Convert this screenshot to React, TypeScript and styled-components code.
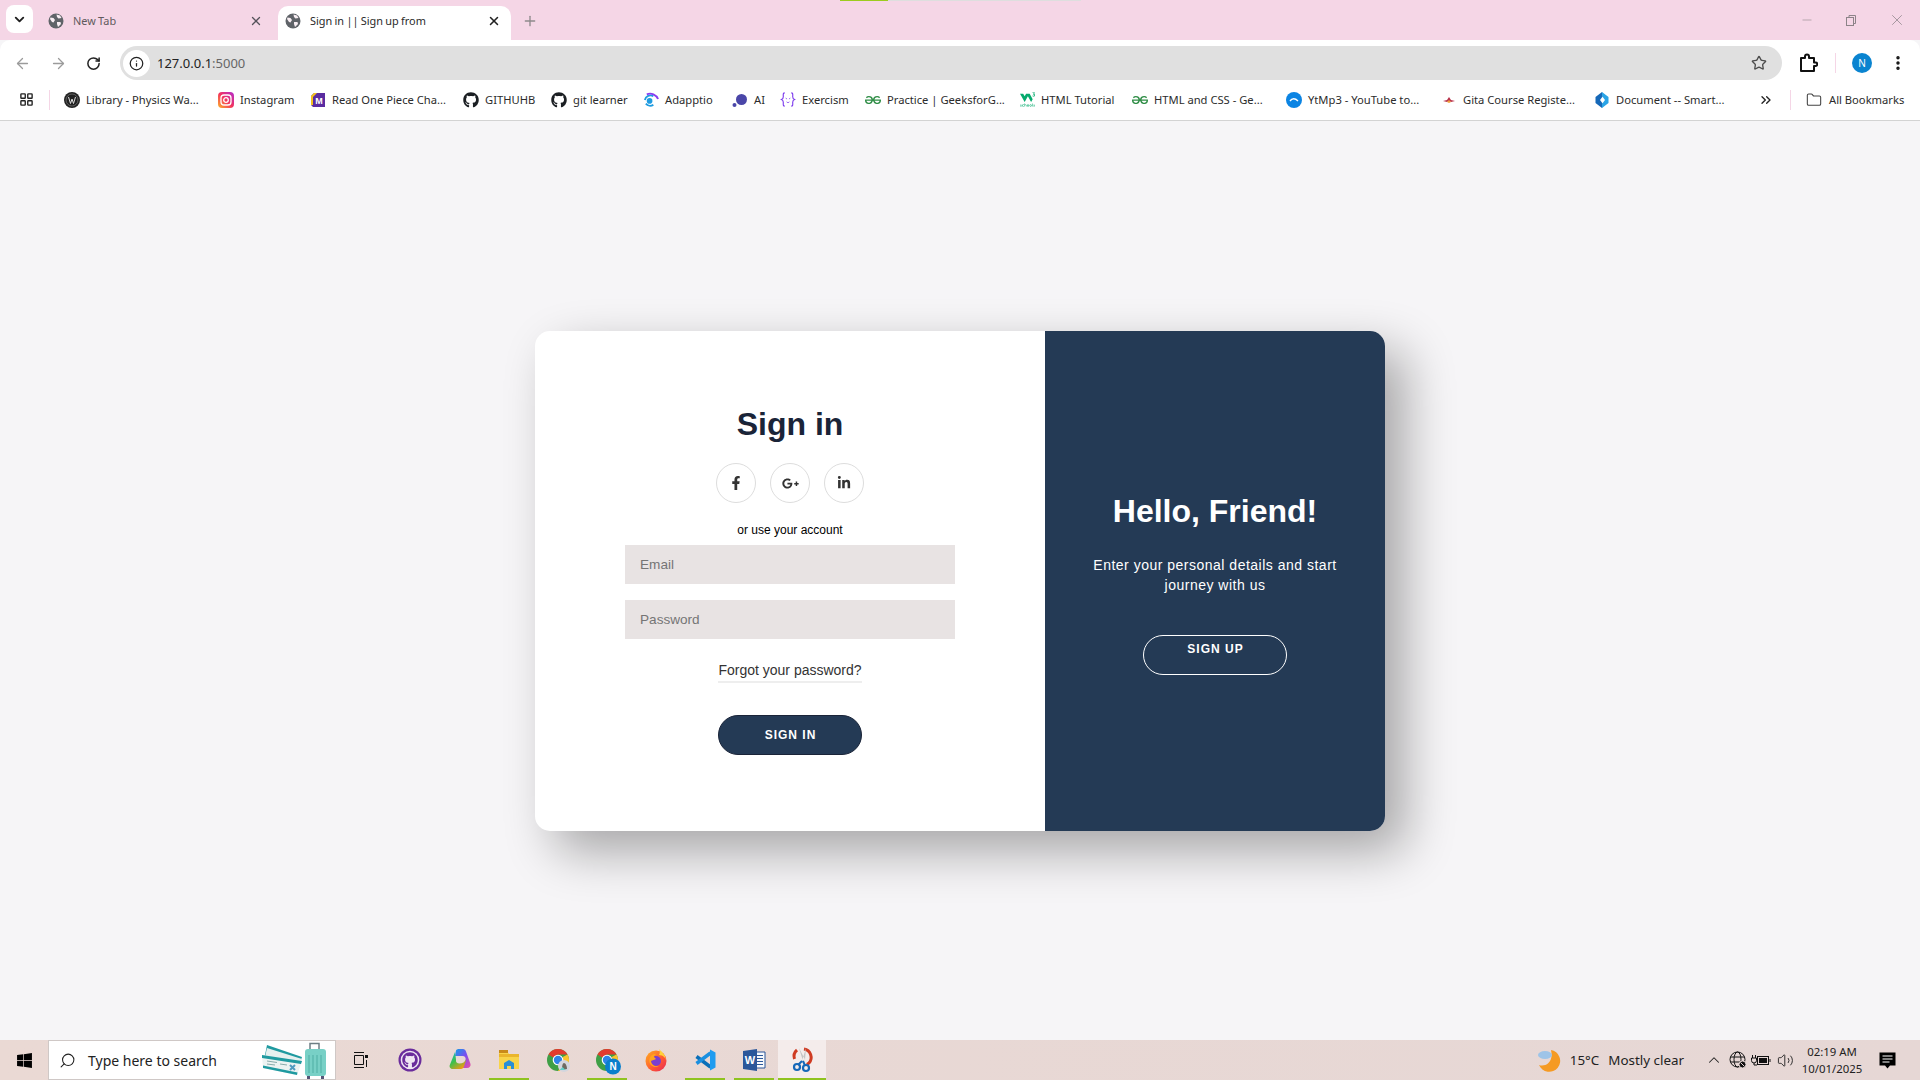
import React from "react";
import styled, { createGlobalStyle } from "styled-components";
import { ArrowLeft, ArrowRight, ChevronDown, ChevronUp, ChevronsRight, Folder, Info, LayoutGrid, MoreVertical, Plus, RotateCw, Search, Star, Volume2, X, Minus } from "lucide-react";
import { FaFacebookF, FaGooglePlusG, FaLinkedinIn, FaGithub, FaWindows } from "react-icons/fa";
import { SiGeeksforgeeks, SiW3Schools } from "react-icons/si";

const Global = createGlobalStyle`
  html, body { margin: 0; padding: 0; height: 100%; overflow: hidden; }
  #root { height: 100%; }
  * { box-sizing: border-box; }
`;

const Screen = styled.div`
  width: 1920px;
  height: 1080px;
  display: flex;
  flex-direction: column;
  background: #f6f5f7;
  font-family: "Noto Sans", "Open Sans", sans-serif;
`;

const TabStrip = styled.div`
  height: 40px;
  background: #f5d6e6;
  display: flex;
  align-items: flex-end;
  padding-left: 6px;
  position: relative;
  flex: none;
`;

const LoadBar = styled.div`
  position: absolute;
  left: 840px;
  top: 0;
  width: 241px;
  height: 1px;
  background: linear-gradient(90deg, #9ccb1e 0 48px, #dedede 48px);
`;

const TabSearch = styled.div`
  width: 27px;
  height: 28px;
  margin: 0 8px 7px 0;
  border-radius: 8px;
  background: #fff;
  color: #1f1f1f;
  display: flex;
  align-items: center;
  justify-content: center;
`;

const Tab = styled.div<{ $active?: boolean; $w: number; $pr: number }>`
  width: ${(p) => p.$w}px;
  height: 34px;
  border-radius: 10px 10px 0 0;
  display: flex;
  align-items: center;
  padding: 0 ${(p) => p.$pr}px 5px 7px;
  gap: 9px;
  background: ${(p) => (p.$active ? "#fff" : "transparent")};
  color: ${(p) => (p.$active ? "#2a2a2a" : "#5f5a5d")};
  font-size: 10.9px;
`;

const TabTitle = styled.span`
  flex: 1;
  white-space: nowrap;
  overflow: hidden;
  word-spacing: -0.5px;
`;

const Favicon = styled.svg`
  flex: none;
  width: 16px;
  height: 16px;
`;

const NewTab = styled.div`
  width: 38px;
  height: 34px;
  display: flex;
  align-items: center;
  justify-content: center;
  padding-bottom: 5px;
  color: #8e8a8c;
`;

const WindowControls = styled.div`
  margin-left: auto;
  height: 40px;
  display: flex;
  align-items: center;
  padding-right: 14px;
  gap: 30px;
  color: #8c8388;
`;

const Toolbar = styled.div`
  height: 40px;
  flex: none;
  background: #fff;
  border-radius: 10px 10px 0 0;
  display: flex;
  align-items: flex-start;
  padding: 6px 13px 0 14px;
`;

const NavButton = styled.div<{ $w: number; $dim?: boolean }>`
  width: ${(p) => p.$w}px;
  height: 34px;
  display: flex;
  align-items: center;
  color: ${(p) => (p.$dim ? "#9b9b9b" : "#222")};
  flex: none;
`;

const Omnibox = styled.div`
  flex: 1;
  height: 34px;
  border-radius: 17px;
  background: #e0e0e0;
  display: flex;
  align-items: center;
  padding: 0 15px 0 3px;
  margin-right: 16px;
`;

const InfoChip = styled.div`
  width: 27px;
  height: 27px;
  border-radius: 50%;
  background: #fff;
  display: flex;
  align-items: center;
  justify-content: center;
  color: #222;
  flex: none;
`;

const Url = styled.div`
  margin-left: 7px;
  font-size: 13px;
  color: #222;
  flex: 1;
  span { color: #666; }
`;

const ToolIcons = styled.div`
  display: flex;
  align-items: center;
  height: 34px;
  flex: none;
  color: #111;
`;

const Divider = styled.div<{ $h: number; $mx: string }>`
  width: 1px;
  height: ${(p) => p.$h}px;
  background: #f5d6e6;
  margin: ${(p) => p.$mx};
  flex: none;
`;

const Avatar = styled.div`
  width: 20px;
  height: 20px;
  border-radius: 50%;
  background: #0a84d0;
  color: #fff;
  font-size: 10px;
  display: flex;
  align-items: center;
  justify-content: center;
  margin-right: 17px;
`;

const BookmarkBar = styled.div`
  height: 41px;
  flex: none;
  background: #fff;
  border-bottom: 1px solid #d3d3d3;
  display: flex;
  align-items: center;
  padding: 0 0 1px 18px;
  font-size: 11.2px;
  color: #2b2b2b;
`;

const AppsIcon = styled.span`
  display: flex;
  margin-left: 1px;
  color: #222;
`;

const Bookmark = styled.div<{ $w: number }>`
  display: flex;
  align-items: center;
  gap: 6px;
  width: ${(p) => p.$w}px;
  flex: none;
  white-space: nowrap;
`;

const BmIcon = styled.span`
  width: 16px;
  height: 16px;
  flex: none;
  display: flex;
  align-items: center;
  justify-content: center;
`;

const MoreMarks = styled.span`
  display: flex;
  margin-left: 14px;
  color: #222;
`;

const FolderLabel = styled.span`
  margin-left: 1px;
`;

const Main = styled.main`
  flex: 1;
  display: flex;
  align-items: center;
  justify-content: center;
  font-family: "Liberation Sans", Arial, sans-serif;
  padding-top: 1px;
`;

const Card = styled.div`
  width: 850px;
  height: 500px;
  border-radius: 15px;
  background: #fff;
  box-shadow: 20px 20px 50px rgba(0, 0, 0, 0.33);
  display: flex;
  overflow: hidden;
`;

const FormPanel = styled.form`
  width: 510px;
  display: flex;
  flex-direction: column;
  align-items: center;
  padding-top: 75px;
`;

const Title = styled.h1`
  margin: 0;
  font-size: 32px;
  line-height: 37px;
  font-weight: 700;
  color: #1a2438;
`;

const Socials = styled.div`
  display: flex;
  gap: 14px;
  margin-top: 20px;
`;

const Social = styled.a`
  width: 40px;
  height: 40px;
  border-radius: 50%;
  border: 1px solid #ddd;
  color: #333;
  display: flex;
  align-items: center;
  justify-content: center;
  font-size: 14px;
`;

const Hint = styled.span`
  font-size: 12px;
  line-height: 14px;
  color: #000;
  margin-top: 20px;
`;

const Field = styled.input<{ $mt: number }>`
  width: 330px;
  height: 39px;
  margin-top: ${(p) => p.$mt}px;
  border: none;
  outline: none;
  background: #e8e3e3;
  padding: 0 15px 1px;
  font: 13.6px "Liberation Sans", Arial, sans-serif;
  &::placeholder { color: #757575; opacity: 1; }
`;

const Forgot = styled.a`
  margin-top: 21px;
  padding-bottom: 1px;
  font-size: 14px;
  line-height: 20px;
  color: #333;
  border-bottom: 2px solid #eee;
`;

const PrimaryButton = styled.button`
  width: 144px;
  height: 40px;
  margin-top: 32px;
  border-radius: 20px;
  border: 1px solid #1a2438;
  background: #243a55;
  color: #fff;
  font: 700 12px "Liberation Sans", Arial, sans-serif;
  letter-spacing: 1px;
  padding: 0 0 0 1px;
`;

const GreetPanel = styled.div`
  flex: 1;
  background: #243a55;
  color: #fff;
  display: flex;
  flex-direction: column;
  align-items: center;
  padding-top: 162px;
  text-align: center;
`;

const Greeting = styled.h2`
  margin: 0;
  font-size: 32px;
  line-height: 37px;
  font-weight: 700;
`;

const Blurb = styled.p`
  margin: 25px 0 0;
  width: 270px;
  font-size: 14px;
  line-height: 20px;
  letter-spacing: 0.5px;
`;

const GhostButton = styled.button`
  width: 144px;
  height: 40px;
  margin-top: 40px;
  border-radius: 20px;
  border: 1px solid #fff;
  background: transparent;
  color: #fff;
  font: 700 12px "Liberation Sans", Arial, sans-serif;
  letter-spacing: 1px;
  padding: 0 0 12px 1px;
`;

const Taskbar = styled.div`
  height: 40px;
  flex: none;
  background: linear-gradient(90deg, #ead9d4, #e6d7d5);
  display: flex;
  align-items: stretch;
  color: #111;
`;

const StartButton = styled.div`
  width: 48px;
  display: flex;
  align-items: center;
  justify-content: center;
  flex: none;
`;

const SearchBox = styled.div`
  width: 288px;
  background: #fff;
  border: 1px solid #cfc8c6;
  display: flex;
  align-items: center;
  padding-left: 10px;
  font-size: 14px;
  color: #222;
  flex: none;
`;

const SearchGlass = styled.span`
  display: flex;
  transform: scaleX(-1);
  margin-right: 12px;
`;

const SearchArt = styled.svg`
  margin-left: auto;
  margin-right: 7px;
  flex: none;
`;

const TaskItem = styled.div<{ $running?: boolean; $active?: boolean; $w?: number }>`
  width: ${(p) => p.$w ?? 49}px;
  flex: none;
  display: flex;
  align-items: center;
  justify-content: center;
  position: relative;
  background: ${(p) => (p.$active ? "#f4eceb" : "transparent")};
  svg { overflow: visible; }
  &::after {
    content: "";
    position: absolute;
    left: ${(p) => (p.$active ? 0 : 5)}px;
    right: ${(p) => (p.$active ? 0 : 4)}px;
    bottom: 0;
    height: 2px;
    background: ${(p) => (p.$running ? "#8fc31f" : "transparent")};
  }
`;

const Tray = styled.div`
  margin-left: auto;
  display: flex;
  align-items: center;
  font-size: 13.4px;
  color: #222;
  flex: none;
  padding-right: 10px;
`;

const TrayText = styled.span<{ $ml: number }>`
  margin-left: ${(p) => p.$ml}px;
  white-space: nowrap;
`;

const TrayIcon = styled.span<{ $w: number; $ml?: number }>`
  width: ${(p) => p.$w}px;
  margin-left: ${(p) => p.$ml ?? 0}px;
  display: flex;
  align-items: center;
  justify-content: center;
  flex: none;
`;

const Clock = styled.div`
  width: 64px;
  margin-left: 3px;
  text-align: center;
  font-size: 11.4px;
  line-height: 17px;
`;

const Globe16 = () => (
  <Favicon viewBox="0 0 16 16">
    <circle cx="8" cy="8" r="7.500" fill="#5f6368" />
    <path d="M2.500 4.500l3 .5 1.500 2-1.500 2.500-1.500-.5-2-3zM8.500 1.500l3.500 1 1.500 2.500-3 .5-1.500-1.500zM9 9l3.500 0 .5 2-3 3-1-3z" fill="#f8eef3" />
  </Favicon>
);

const Chrome = ({ badge }: { badge: "N" | "K" }) => (
  <svg width="24" height="24" viewBox="0 0 24 24">
    <circle cx="12" cy="12" r="11" fill="#3f9f46" />
    <path d="M2.470 6.500A11 11 0 0 1 21.530 6.500H12L7.200 9.500Z" fill="#e33b2e" />
    <path d="M21.530 6.500A11 11 0 0 1 12 23L16.800 14.500V9Z" fill="#fbc52d" />
    <circle cx="12" cy="12" r="5.300" fill="#fff" />
    <circle cx="12" cy="12" r="4.200" fill="#2f84e8" />
    {badge === "N" ? (
      <>
        <circle cx="18" cy="18.500" r="8" fill="#0a7fcc" />
        <text x="18" y="22" fontSize="10" fontWeight="700" fill="#fff" textAnchor="middle" fontFamily="Liberation Sans">N</text>
      </>
    ) : (
      <>
        <circle cx="18" cy="18" r="6" fill="#d3d6de" />
        <path d="M16 22c0-4 .5-7 2-7s3 3 3 6z" fill="#6d6a60" />
        <path d="M13.500 22h6l-3-3z" fill="#62d0c8" />
      </>
    )}
  </svg>
);

const PuzzleIcon = () => (
  <svg width="20" height="20" viewBox="0 0 20 20" fill="none" stroke="#111" strokeWidth="2" strokeLinejoin="round">
    <path d="M3 5h4V3.500a2 2 0 0 1 4 0V5h5v4.500h1.500a1.800 1.800 0 0 1 0 3.600H16V18H3z" />
  </svg>
);

const BatteryIcon = () => (
  <svg width="20" height="14" viewBox="0 0 20 14" fill="none" stroke="#111">
    <path d="M1.500 2v3M4.500 2v3M.5 5h5v2.500a2.500 2.500 0 0 1-5 0zM3 10v2h3" />
    <rect x="6.500" y="3.500" width="11" height="8" />
    <rect x="8" y="5" width="8" height="5" fill="#111" stroke="none" />
    <path d="M19 6v3" />
  </svg>
);

const GlobeBadge = () => (
  <svg width="18" height="18" viewBox="0 0 18 18" fill="none" stroke="#111">
    <circle cx="8.500" cy="8.500" r="7.500" />
    <ellipse cx="8.500" cy="8.500" rx="3.500" ry="7.500" />
    <path d="M1.500 6h14M1.500 11h14" />
    <circle cx="13.500" cy="13.500" r="3.500" fill="#111" stroke="#e6d7d5" />
    <path d="M11.500 11.500l4 4" stroke="#e6d7d5" />
  </svg>
);

const NoteIcon = () => (
  <svg width="17" height="17" viewBox="0 0 17 17">
    <path d="M.5.500h16v13h-5.500L8.500 16.500 6 13.500H.5z" fill="#000" />
    <path d="M3.500 4h10M3.500 7h10M3.500 10h7" stroke="#fff" />
  </svg>
);

const bookmarks: { w: number; label: string; icon: React.ReactNode }[] = [
  { w: 154, label: "Library - Physics Wa...", icon: <svg width="16" height="16" viewBox="0 0 16 16"><circle cx="8" cy="8" r="8" fill="#222" /><circle cx="8" cy="8" r="6" fill="none" stroke="#888" strokeWidth=".6" /><path d="M4.500 5l2 6.500L8 7l1.500 4.500 2-6.500" stroke="#ddd" fill="none" /></svg> },
  { w: 92, label: "Instagram", icon: <svg width="16" height="16" viewBox="0 0 16 16"><defs><linearGradient id="ig" x1="0" y1="1" x2="1" y2="0"><stop offset="0" stopColor="#fdb32b" /><stop offset=".5" stopColor="#f2335f" /><stop offset="1" stopColor="#b32bd0" /></linearGradient></defs><rect width="16" height="16" rx="4" fill="url(#ig)" /><rect x="3" y="3" width="10" height="10" rx="3" fill="none" stroke="#fff" strokeWidth="1.300" /><circle cx="8" cy="8" r="2.300" fill="none" stroke="#fff" strokeWidth="1.300" /></svg> },
  { w: 153, label: "Read One Piece Cha...", icon: <svg width="16" height="16" viewBox="0 0 16 16"><path d="M1 4l3-3h11v14H3l-2-2z" fill="#5a2ca0" /><path d="M1 4l3-3h3L3 5v8l-2 0z" fill="#f4c21f" /><text x="9" y="12" fontSize="9" fontWeight="700" fill="#fff" textAnchor="middle" fontFamily="Liberation Sans">M</text></svg> },
  { w: 88, label: "GITHUHB", icon: <FaGithub size={16} color="#1b1f23" /> },
  { w: 92, label: "git learner", icon: <FaGithub size={16} color="#1b1f23" /> },
  { w: 89, label: "Adapptio", icon: <svg width="17" height="17" viewBox="0 0 17 17"><circle cx="7" cy="10" r="3" fill="#1e9be0" /><path d="M2 9a6 6 0 0 1 9-4" stroke="#1e9be0" strokeWidth="2" fill="none" /><path d="M4 3a9 9 0 0 1 12 5" stroke="#8a3df0" strokeWidth="2" fill="none" /><path d="M3 13a6 6 0 0 0 8 1" stroke="#1e9be0" strokeWidth="2" fill="none" /></svg> },
  { w: 48, label: "AI", icon: <svg width="16" height="16" viewBox="0 0 16 16"><circle cx="9.500" cy="7.500" r="5.500" fill="#4a46a8" /><circle cx="2.500" cy="13" r="2" fill="#4a46a8" /></svg> },
  { w: 85, label: "Exercism", icon: <svg width="17" height="17" viewBox="0 0 17 17" fill="none" stroke="#7c3aed" strokeWidth="1.200"><path d="M5 1.500c-2 0-1.500 2-1.500 4S3 8 1.500 8.500C3 9 3.500 9.500 3.500 11.500s-.5 4 1.500 4M12 1.500c2 0 1.500 2 1.500 4S14 8 15.500 8.500C14 9 13.500 9.500 13.500 11.500s.5 4-1.500 4" /><path d="M6 7l1.500 1M11 7 9.500 8M7 11l1.500 1 1.500-1" strokeWidth=".8" /></svg> },
  { w: 154, label: "Practice | GeeksforG...", icon: <SiGeeksforgeeks size={16} color="#2f8d46" /> },
  { w: 113, label: "HTML Tutorial", icon: <SiW3Schools size={15} color="#04aa6d" /> },
  { w: 154, label: "HTML and CSS - Ge...", icon: <SiGeeksforgeeks size={16} color="#2f8d46" /> },
  { w: 155, label: "YtMp3 - YouTube to...", icon: <svg width="16" height="16" viewBox="0 0 16 16"><circle cx="8" cy="8" r="8" fill="#0b84e3" /><path d="M4 9c2-3 5-3 8 0" stroke="#fff" strokeWidth="1.400" fill="none" /></svg> },
  { w: 153, label: "Gita Course Registe...", icon: <svg width="16" height="16" viewBox="0 0 16 16"><path d="M2 9l4-1 2-3 2 3 4 1-4 1-2-1-2 1z" fill="#b8324a" /><path d="M6 10l2-2 2 2-2 1z" fill="#f2a33a" /></svg> },
  { w: 150, label: "Document -- Smart...", icon: <svg width="16" height="16" viewBox="0 0 16 16"><path d="M8 0 1.500 5v6L8 16l1-4-3-4 3-4z" fill="#1668b8" /><path d="M8 0l6.500 5v6L8 16l0-4 3-4-3-4z" fill="#2aa4e6" /></svg> },
];

export default function App() {
  return (
    <Screen>
      <Global />
      <TabStrip>
        <LoadBar />
        <TabSearch><ChevronDown size={15} strokeWidth={3} /></TabSearch>
        <Tab $w={237} $pr={15}>
          <Globe16 /><TabTitle>New Tab</TabTitle><X size={14} strokeWidth={2.2} color="#55525a" />
        </Tab>
        <Tab $active $w={233} $pr={10}>
          <Globe16 /><TabTitle>Sign in || Sign up from</TabTitle><X size={14} strokeWidth={2.6} color="#222" />
        </Tab>
        <NewTab><Plus size={16} strokeWidth={2} /></NewTab>
        <WindowControls>
          <Minus size={14} strokeWidth={1} />
          <svg width="14" height="14" viewBox="0 0 14 14" fill="none" stroke="currentColor"><rect x="2.500" y="4.500" width="7" height="8" /><path d="M5 4.500V2.500h6.500v8H9.500" /></svg>
          <X size={18} strokeWidth={1} />
        </WindowControls>
      </TabStrip>
      <Toolbar>
        <NavButton $w={36} $dim><ArrowLeft size={17} strokeWidth={1.8} /></NavButton>
        <NavButton $w={36} $dim><ArrowRight size={17} strokeWidth={1.8} /></NavButton>
        <NavButton $w={34}><RotateCw size={15} strokeWidth={2.4} /></NavButton>
        <Omnibox>
          <InfoChip><Info size={15} strokeWidth={2} /></InfoChip>
          <Url>127.0.0.1<span>:5000</span></Url>
          <Star size={16} strokeWidth={2} color="#4d4d4d" />
        </Omnibox>
        <ToolIcons>
          <PuzzleIcon />
          <Divider $h={20} $mx="0 16px 0 17px" />
          <Avatar>N</Avatar>
          <MoreVertical size={18} strokeWidth={2.6} />
        </ToolIcons>
      </Toolbar>
      <BookmarkBar>
        <AppsIcon><LayoutGrid size={15} strokeWidth={2.2} /></AppsIcon>
        <Divider $h={20} $mx="0 14px 0 15px" />
        {bookmarks.map((b) => (
          <Bookmark key={b.label} $w={b.w}>
            <BmIcon>{b.icon}</BmIcon>
            <span>{b.label}</span>
          </Bookmark>
        ))}
        <MoreMarks><ChevronsRight size={16} strokeWidth={2} /></MoreMarks>
        <Divider $h={20} $mx="0 15px 0 16px" />
        <Bookmark $w={110}>
          <BmIcon><Folder size={16} strokeWidth={1.6} color="#444" /></BmIcon>
          <FolderLabel>All Bookmarks</FolderLabel>
        </Bookmark>
      </BookmarkBar>
      <Main>
        <Card>
          <FormPanel>
            <Title>Sign in</Title>
            <Socials>
              <Social><FaFacebookF /></Social>
              <Social><FaGooglePlusG size={17} /></Social>
              <Social><FaLinkedinIn /></Social>
            </Socials>
            <Hint>or use your account</Hint>
            <Field $mt={8} placeholder="Email" />
            <Field $mt={16} placeholder="Password" />
            <Forgot>Forgot your password?</Forgot>
            <PrimaryButton type="button">SIGN IN</PrimaryButton>
          </FormPanel>
          <GreetPanel>
            <Greeting>Hello, Friend!</Greeting>
            <Blurb>Enter your personal details and start journey with us</Blurb>
            <GhostButton type="button">SIGN UP</GhostButton>
          </GreetPanel>
        </Card>
      </Main>
      <Taskbar>
        <StartButton><FaWindows size={17} color="#000" /></StartButton>
        <SearchBox>
          <SearchGlass><Search size={17} strokeWidth={1.5} /></SearchGlass>
          Type here to search
          <SearchArt width="66" height="38" viewBox="0 1 66 38">
            <path d="M5 5 40 17 36 30 2 20z" fill="#1f9aa0" />
            <path d="M5 8 40 19 37 27 3 17z" fill="#e6f0ef" />
            <path d="M0 15 40 21 35 35 1 28z" fill="#ecf3f2" />
            <path d="M0 15 40 21 39 24 0 18z" fill="#1f9aa0" />
            <path d="M1 28 35 35 35.500 32.500 1 25.500z" fill="#1f9aa0" />
            <path d="M5 21l10 1.500M5 24l8 1M18 24l7 1" stroke="#88aaaa" />
            <path d="M28 25l5 5M33 25l-5 5" stroke="#4f9bc0" strokeWidth="2" />
            <path d="M48 9V3.500h9V9" fill="none" stroke="#6d7f85" strokeWidth="1.500" />
            <rect x="43" y="9" width="21" height="27" rx="3" fill="#78d0c6" />
            <path d="M47 15v18M51 15v18M55 15v18M59 15v18" stroke="#4faea4" />
            <rect x="45" y="36" width="3" height="3" fill="#555577" />
            <rect x="59" y="36" width="3" height="3" fill="#555577" />
          </SearchArt>
        </SearchBox>
        <TaskItem $w={48}>
          <svg width="17" height="16" viewBox="0 0 17 16" fill="none" stroke="#111"><path d="M2 .5h10M2 15.500h10M2.500 3.500h9v9h-9zM14.500 8v7" /><rect x="13" y="3" width="3" height="3" fill="#111" stroke="none" /></svg>
        </TaskItem>
        <TaskItem $w={51}>
          <svg width="24" height="24" viewBox="0 0 24 24">
            <circle cx="12" cy="12" r="11.500" fill="#6a2c9c" />
            <circle cx="12" cy="12" r="9.300" fill="#efe6f3" />
            <FaGithub size={16} color="#6a2c9c" x={4} y={4} />
          </svg>
        </TaskItem>
        <TaskItem>
          <svg width="24" height="24" viewBox="0 0 24 24">
            <defs>
              <linearGradient id="cp" x1="0" y1="0" x2="1" y2="1"><stop offset="0" stopColor="#0f9fe8" /><stop offset=".5" stopColor="#7c4df0" /><stop offset="1" stopColor="#ee4fa0" /></linearGradient>
              <linearGradient id="cq" x1="0" y1="0" x2=".7" y2="1"><stop offset="0" stopColor="#12b8d8" /><stop offset=".5" stopColor="#3cc04a" /><stop offset="1" stopColor="#f59a14" /></linearGradient>
            </defs>
            <path d="M8 2.500C8.500 1.500 9.500 1 11 1h4c1.500 0 2.500 1 3 2.500L22.500 16c.5 2-1 4-3.500 4h-5l3.500-8c.7-2-.5-4-3-4H7z" fill="url(#cp)" />
            <path d="M7 4 1.800 17c-.8 2 .7 4 3 4H13c1.500 0 2.500-1 3-2.500L18.500 11c-1.500 3-4 4.500-7 4.500-2.500 0-4-1.500-3.500-4z" fill="url(#cq)" />
          </svg>
        </TaskItem>
        <TaskItem $running>
          <svg width="24" height="22" viewBox="0 0 24 22"><path d="M2 2h8l2 3h10v15H2z" fill="#f8d44a" /><path d="M2 5h20v3H2z" fill="#eab52c" /><rect x="2" y="1" width="9" height="3" fill="#c98a1a" /><path d="M7 20v-6l5-3 5 3v6h-3v-3h-4v3z" fill="#2a8fd6" /></svg>
        </TaskItem>
        <TaskItem><Chrome badge="K" /></TaskItem>
        <TaskItem $running><Chrome badge="N" /></TaskItem>
        <TaskItem>
          <svg width="24" height="24" viewBox="0 0 24 24">
            <defs><linearGradient id="ff" x1="0" y1="0" x2="1" y2="1"><stop offset="0" stopColor="#ffb01f" /><stop offset=".6" stopColor="#ff5634" /><stop offset="1" stopColor="#e3255a" /></linearGradient></defs>
            <circle cx="12" cy="13" r="10.500" fill="url(#ff)" />
            <circle cx="12" cy="13" r="5" fill="#7a3fd1" />
            <path d="M15 1c3 3 7 6 7 12 0-3-3-6-7-6 1-2 1-4 0-6z" fill="#ffd23a" />
            <path d="M8 7c-3 2-4 7-1 10s7 2 8 1c-4 1-8-1-8-5 1-1 4-1 5-2l-2-2c0-1 1-2 2-3-2 0-3 0-4 1z" fill="#ffa51f" />
          </svg>
        </TaskItem>
        <TaskItem $running>
          <svg width="24" height="24" viewBox="0 0 24 24" fill="none">
            <path d="M3.500 8.500 17.500 19" stroke="#0a6fb8" strokeWidth="3.500" />
            <path d="M3.500 15.500 17.500 5" stroke="#1a8fe0" strokeWidth="3.500" />
            <path d="M17 1.500 22.500 4.500V19.500L17 22.500Z" fill="#1f9cf0" />
          </svg>
        </TaskItem>
        <TaskItem $running>
          <svg width="24" height="24" viewBox="0 0 24 24">
            <path d="M13 4h10v16H13z" fill="#f7f9fc" stroke="#2b579a" />
            <path d="M15 7.500h6M15 10.500h6M15 13.500h6M15 16.500h6" stroke="#2b579a" />
            <path d="M1 3 15 1V23L1 21Z" fill="#2b579a" />
            <text x="8" y="16" fontSize="11" fontWeight="700" fill="#fff" textAnchor="middle" fontFamily="Liberation Sans">W</text>
          </svg>
        </TaskItem>
        <TaskItem $running $active $w={48}>
          <svg width="22" height="26" viewBox="0 0 22 26" fill="none">
            <path d="M13 2a8.500 8.500 0 0 1 5 14l-2 1.500" stroke="#cf3b22" strokeWidth="3" />
            <path d="M6 3a8.500 8.500 0 0 0-2.500 9" stroke="#cf3b22" strokeWidth="3" />
            <path d="M8 1l4 13 2-1.500zM15 1l-1 12-3 1z" fill="#c4c4c4" />
            <circle cx="6" cy="20" r="3" stroke="#1668b8" strokeWidth="2.200" />
            <circle cx="15" cy="21" r="3" stroke="#1668b8" strokeWidth="2.200" />
            <path d="M7 18l4-4M14 18.500 12 14" stroke="#1668b8" strokeWidth="2" />
          </svg>
        </TaskItem>
        <Tray>
          <svg width="24" height="23" viewBox="0 0 24 23"><path d="M14 1a11 11 0 1 1-12 15c5 2 15-1 12-15z" fill="#f59a23" /><ellipse cx="8" cy="6" rx="7" ry="4" fill="#9ec4e8" /></svg>
          <TrayText $ml={9}>15°C</TrayText>
          <TrayText $ml={9}>Mostly clear</TrayText>
          <TrayIcon $w={26} $ml={17}><ChevronUp size={18} strokeWidth={1.4} /></TrayIcon>
          <TrayIcon $w={22}><GlobeBadge /></TrayIcon>
          <TrayIcon $w={24}><BatteryIcon /></TrayIcon>
          <TrayIcon $w={24}><Volume2 size={17} strokeWidth={1.3} /></TrayIcon>
          <Clock>02:19 AM<br />10/01/2025</Clock>
          <TrayIcon $w={46}><NoteIcon /></TrayIcon>
        </Tray>
      </Taskbar>
    </Screen>
  );
}
